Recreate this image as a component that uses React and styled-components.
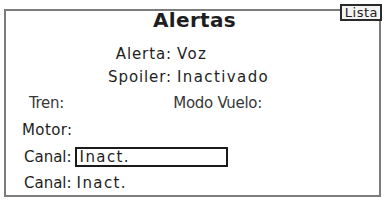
import styled, { createGlobalStyle } from "styled-components";

const GlobalStyle = createGlobalStyle`
    html, body {
        margin: 0;
        padding: 0;
        background-color: #ffffff;
    }
    body {
        font-family: "DejaVu Sans", "Liberation Sans", sans-serif;
        color: #1e1e1e;
    }
`;

const Page = styled.div`
    width: 384px;
    height: 201px;
    padding: 9px 3px 4px 4px;
    box-sizing: border-box;
`;

const Screen = styled.div`
    position: relative;
    display: flex;
    flex-direction: column;
    height: 100%;
    border: 2px solid #7c7c7c;
    box-sizing: border-box;
`;

const Tab = styled.div`
    position: absolute;
    top: -7px;
    right: -3px;
    padding: 0 2px 0 3px;
    height: 13px;
    line-height: 13px;
    border: 2px solid #2a2a2a;
    background-color: #f4f4f4;
    font-size: 13px;
    letter-spacing: 0.5px;
`;

const Title = styled.div`
    height: 19px;
    line-height: 19px;
    text-align: center;
    font-size: 20px;
    font-weight: bold;
    letter-spacing: 0.3px;
    padding-left: 4px;
`;

const Row = styled.div`
    display: flex;
    align-items: center;
    height: 22px;
    margin-top: ${(props) => props.$mt || 0}px;
    padding-left: ${(props) => props.$indent || 0}px;
    font-size: 15px;
    color: ${(props) => props.$light ? "#383838" : "inherit"};
    letter-spacing: ${(props) => props.$spacing ?? 0.4}px;
    white-space: nowrap;
`;

const Label = styled.span`
    width: ${(props) => props.$width}px;
    text-align: right;
    flex-shrink: 0;
`;

const Value = styled.span`
    margin-left: ${(props) => props.$gap || 5}px;
    letter-spacing: 1.4px;
`;

const Field = styled.div`
    display: flex;
    align-items: center;
    width: 146px;
    height: 16px;
    margin-left: 3px;
    padding-left: 3px;
    border: 2px solid #1a1a1a;
    letter-spacing: 1.4px;
`;

export default function App() {
    return (
        <Page>
            <GlobalStyle />
            <Screen>
                <Tab>Lista</Tab>
                <Title>Alertas</Title>
                <Row $mt={13} $spacing={0.9}>
                    <Label $width={166}>Alerta:</Label>
                    <Value>Voz</Value>
                </Row>
                <Row $mt={1} $spacing={0.9}>
                    <Label $width={166}>Spoiler:</Label>
                    <Value>Inactivado</Value>
                </Row>
                <Row $mt={4} $light $spacing={-0.3}>
                    <Label $width={58}>Tren:</Label>
                    <Label $width={198}>Modo Vuelo:</Label>
                </Row>
                <Row $mt={5} $indent={16}>Motor:</Row>
                <Row $mt={5} $indent={18} $spacing={0}>
                    Canal:
                    <Field>Inact.</Field>
                </Row>
                <Row $mt={4} $indent={18} $spacing={0}>
                    Canal:
                    <Value>Inact.</Value>
                </Row>
            </Screen>
        </Page>
    );
}
